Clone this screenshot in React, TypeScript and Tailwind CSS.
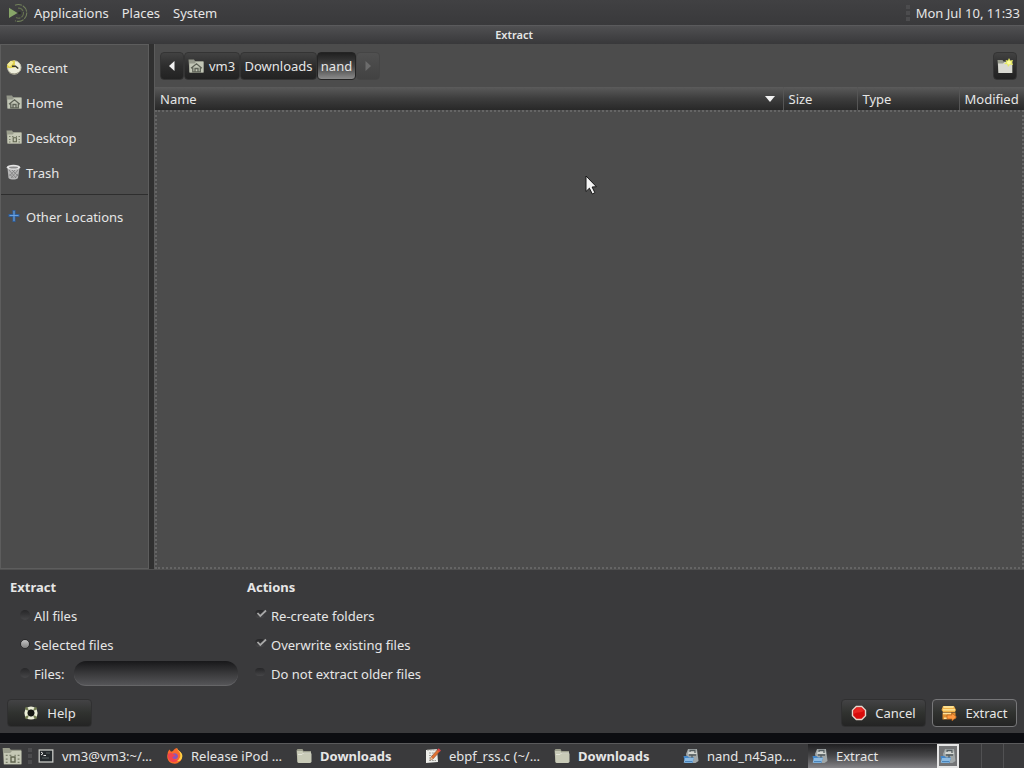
import React, { useState } from "react";
import type { ReactNode } from "react";

type IconProps = { className?: string };

function MateLogo() {
  return (
    <svg viewBox="0 0 20 20" className="size-5 shrink-0" fill="none" aria-hidden="true">
      <path d="M7 2.3A8.4 8.4 0 1 1 7 17.7" stroke="#72805b" strokeWidth="1.1" strokeDasharray="7 1" />
      <path d="M10 5.2A5 5 0 1 1 8 14.5" stroke="#64704f" strokeWidth="1.1" strokeDasharray="6 1" />
      <path d="M1 4.8 9.5 10 1 15z" fill="#87a568" />
      <circle cx="11.5" cy="10" r="1.3" fill="#27301f" />
    </svg>
  );
}

function FolderIcon({ className = "size-4" }: IconProps) {
  return (
    <svg viewBox="0 0 16 16" className={`${className} shrink-0`} aria-hidden="true">
      <path d="M.5 2.5 1.5 1h5l1 2h7.5v11.5H1.5z" fill="#9b9d8c" />
      <path d="M1 3h5.5L8 5.5h7.5V14L14 15H2.5L1.5 14z" fill="#c8cab7" />
      <path d="M2 6.5h4L7.5 5H15" stroke="#e3e4d8" strokeWidth="1" fill="none" />
    </svg>
  );
}

function HomeIcon({ className = "size-4" }: IconProps) {
  return (
    <svg viewBox="0 0 16 16" className={`${className} shrink-0`} aria-hidden="true">
      <path d="M.5 1.5h5.5l1 1.5h8.5v11.5H1.5z" fill="#94978a" />
      <path d="M1.5 5.5h5L8 4h7.5v10.5h-14z" fill="#c2c6b6" />
      <path d="M3 10.3 8.5 5.8l5.3 4.5M4.8 9.5v4.3h7.5V9.5M7 13.5v-3h3v3" fill="none" stroke="#5e6257" strokeWidth="1.3" />
    </svg>
  );
}

function DesktopIcon({ className = "size-4" }: IconProps) {
  return (
    <svg viewBox="0 0 16 16" className={`${className} shrink-0`} aria-hidden="true">
      <path d="M.5 1.5h5.5l1 1.5h8.5v11.5H1.5z" fill="#9b9e8d" />
      <path d="M1.5 5.5h5L8 4h7.5v10.5h-14z" fill="#c5c8b5" />
      <path d="M3 7.5h1.5M6 7.5h1.5M10 7.5h1M12.5 7.5H14M3 10.5h1.5M12.5 10.5H14M3 13h1.5M12.5 13H14" stroke="#7b7f6c" strokeWidth="1" />
      <path d="M7.2 8.8h3.2v4H7.2z" fill="none" stroke="#60644f" strokeWidth="1.1" />
    </svg>
  );
}

function RecentIcon() {
  return (
    <svg viewBox="0 0 16 16" className="size-4 shrink-0" aria-hidden="true">
      <circle cx="8.3" cy="8.5" r="6.7" fill="#eeeedc" stroke="#c2c1ad" />
      <path d="M8.8 8.5 9 1.5C5 .8 1 4 .8 8.5l3 .8z" fill="#dfd04c" />
      <path d="m1 5.5 4-4 2.5 2L4 8z" fill="#f2eb9a" />
      <path d="M6 7.2h3.5l2.8 2.3" stroke="#39382e" strokeWidth="1.5" fill="none" />
      <path d="M3 13.5c3 2 8 2 10.5-1" stroke="#93907e" fill="none" />
    </svg>
  );
}

function TrashIcon() {
  return (
    <svg viewBox="0 0 16 16" className="size-4 shrink-0" aria-hidden="true">
      <path d="m1.5 4 1 10c2 2 7.5 2 9.500 0l1.500-10z" fill="#b6b6b6" />
      <path d="m3 6 7 8M6 6l6 6M3.5 10l4 4M12 6l-7 8M9 6l-5.500 6M12 10l-3 4" stroke="#7d7d7d" strokeWidth=".8" />
      <ellipse cx="7.5" cy="3.3" rx="6.7" ry="2.5" fill="#e4e4e4" />
      <ellipse cx="7.5" cy="3.5" rx="4.5" ry="1.1" fill="#8b8b8b" />
    </svg>
  );
}

function PlusIcon() {
  return (
    <svg viewBox="0 0 16 16" className="size-4 shrink-0" aria-hidden="true">
      <path d="M8 2v12M2.500 7.500h11" stroke="#2f5f9c" strokeWidth="3" />
      <path d="M8 3v10M3.500 7.500h9" stroke="#6ba2df" strokeWidth="1.1" />
    </svg>
  );
}

function NewFolderIcon() {
  return (
    <svg viewBox="0 0 16 16" className="size-4 shrink-0" aria-hidden="true">
      <path d="M.5 2h5l1 1.500h9v11.500h-14z" fill="#999c8e" />
      <path d="M1 5.500h5l1.500-1.500H15v11H1.500z" fill="#d9d9d2" />
      <path d="m12 0 1.300 2.400L16 2l-1 2.400L16 7l-3-.5L11 9l-.7-2.700L7 6l2.400-2L8.500 2l2.400.4z" fill="#e6ea62" />
      <circle cx="12" cy="4.500" r="2" fill="#fbfca0" />
    </svg>
  );
}

function HelpIcon() {
  return (
    <svg viewBox="0 0 16 16" className="size-4 shrink-0" aria-hidden="true">
      <circle cx="8" cy="8" r="5" fill="none" stroke="#edf0d8" strokeWidth="3.200" />
      <path d="m2.500 2.500 2.500 2.500M13.500 2.500 11 5M2.500 13.500 5 11M13.500 13.500 11 11" stroke="#717c50" strokeWidth="2.200" />
      <circle cx="8" cy="8" r="3.300" fill="#151713" />
    </svg>
  );
}

function CancelIcon() {
  return (
    <svg viewBox="0 0 16 16" className="size-4 shrink-0" aria-hidden="true">
      <path d="M5 .8h6L15.200 5v6L11 15.200H5L.8 11V5z" fill="#e7d7cd" />
      <path d="M5.500 2.200h5l3.300 3.300v5l-3.300 3.300h-5l-3.300-3.300v-5z" fill="#d70b0b" />
      <path d="M5.700 3h4.600L13 5.700c-3 2.500-7 1-10 3v-3z" fill="#ea2520" />
    </svg>
  );
}

function ExtractIcon() {
  return (
    <svg viewBox="0 0 16 16" className="size-4 shrink-0" aria-hidden="true">
      <path d="M2 1h11l2 4-1 2H2L.5 5z" fill="#f0b248" />
      <path d="M2.500 2h10M2 4.800h12" stroke="#fff0a8" strokeWidth="1.300" />
      <path d="M1.500 7.500h13V14l-13 .5z" fill="#df8f32" />
      <path d="M2 8.500h8M3 13.200h6" stroke="#ffe29a" strokeWidth="1.500" />
      <path d="M6 10h5V8l4.500 4-4.500 4v-2H6z" fill="#ff993e" stroke="#a95b1c" strokeWidth=".6" />
    </svg>
  );
}

function TerminalIcon() {
  return (
    <svg viewBox="0 0 16 16" className="size-4 shrink-0" aria-hidden="true">
      <rect x="1.200" y="2" width="13.600" height="12" fill="#24292c" stroke="#c7c8c4" strokeWidth="1.300" />
      <path d="m3 4 2 1.500L3 7M5.500 7.500H8" stroke="#eee" fill="none" />
      <path d="M8 5h4M4 10h7" stroke="#566061" />
    </svg>
  );
}

function FirefoxIcon() {
  return (
    <svg viewBox="0 0 16 16" className="size-4 shrink-0" aria-hidden="true">
      <path d="M2.500 1.500 4 3.800 6 3C7 1 9 .3 10 0c0 2 2 2.500 3.500 4.200 4 5-.2 11.400-5.500 11.500C2 15.800-1 10.700.7 5.500c0-1.400.7-2.800 1.800-4z" fill="#f96b2b" />
      <path d="M10 0c0 3 3 3 3.300 7 .3 3-2 5.500-5 5.600 5 2.400 7.400-2 7-5.300C15 3.800 11 3.200 10 0z" fill="#ffd043" />
      <path d="M5.200 6.200c2-2 6-.8 5.800 2.300-.2 2.700-4 3.800-6 1.300L3 7.500z" fill="#8955bc" />
      <path d="M1 6c2-1.500 4-1 5.200.3L8.600 7C8 9 6 8 5.300 9.300c1.300 3 5.300 3 6.700 1-1 4-6 5-9 2.300C1 11 .6 8.300 1 6z" fill="#f2434e" />
    </svg>
  );
}

function EditorIcon() {
  return (
    <svg viewBox="0 0 16 16" className="size-4 shrink-0" aria-hidden="true">
      <path d="m1 2 11-1 1 13-12 1z" fill="#eeeeea" />
      <path d="M2 2h10M4 5h6M4 7.500h5M4 10h3M4 12.500h7" stroke="#8b8b85" strokeWidth=".8" strokeDasharray="2 .8" />
      <path d="m5 12 1-3 7-7.800 2 2L8 11z" fill="#df7132" stroke="#7a402f" strokeWidth=".5" />
      <path d="m12.400 1.800 1.300-1.500L16 2.400l-1.500 1.500z" fill="#d64048" />
      <path d="m5 12 1-3 2 2z" fill="#e8c49b" />
    </svg>
  );
}

function ArchiveIcon() {
  return (
    <svg viewBox="0 0 16 16" className="size-4 shrink-0" aria-hidden="true">
      <path d="M5 1h9l1.500 12-3 2H5L3 6z" fill="#a0a6a7" />
      <path d="M6 2h7l1 4H5z" fill="#d3d6d2" />
      <path d="M7 4V2.500h5V5M6 7h7M9 7v5" stroke="#535c5f" strokeWidth="1.300" fill="none" />
      <path d="M.5 8h4L6 9.500h5L9.500 15H2z" fill="#4386c8" />
      <path d="M2 10h9l-2 4.800H.7z" fill="#8dbbe2" />
      <path d="M2 13.500h7" stroke="#4a85bb" />
    </svg>
  );
}

const places: { label: string; icon: ReactNode }[] = [
  { label: "Recent", icon: <RecentIcon /> },
  { label: "Home", icon: <HomeIcon /> },
  { label: "Desktop", icon: <DesktopIcon /> },
  { label: "Trash", icon: <TrashIcon /> },
];

const tasks: { label: string; icon: ReactNode; bold?: boolean; active?: boolean }[] = [
  { label: "vm3@vm3:~/…", icon: <TerminalIcon /> },
  { label: "Release iPod …", icon: <FirefoxIcon /> },
  { label: "Downloads", icon: <FolderIcon />, bold: true },
  { label: "ebpf_rss.c (~/…", icon: <EditorIcon /> },
  { label: "Downloads", icon: <FolderIcon />, bold: true },
  { label: "nand_n45ap.…", icon: <ArchiveIcon /> },
  { label: "Extract", icon: <ArchiveIcon />, active: true },
];

const pathButton =
  "flex h-7 items-center rounded-sm border border-[#343434] bg-linear-to-b from-[#424242] via-[#2d2d2d] to-[#222]";
const dialogButton =
  "flex h-7 w-[85px] items-center justify-center gap-2 rounded border bg-linear-to-b from-[#434345] via-[#30322f] to-[#242424]";

function Grip() {
  return (
    <span className="flex w-1 shrink-0 flex-col gap-0.5" aria-hidden="true">
      <i className="h-1 bg-[#4c4c4e]" />
      <i className="h-1 bg-[#4c4c4e]" />
      <i className="h-1 bg-[#4c4c4e]" />
    </span>
  );
}

function PlaceButton({ label, icon }: { label: string; icon: ReactNode }) {
  return (
    <button className="flex h-[35px] w-full items-center gap-1 pl-[5px]">
      <span className="mb-0.5">{icon}</span>
      {label}
    </button>
  );
}

function ModeOption({ label, value, mode, onChange }: { label: string; value: string; mode: string; onChange: (v: string) => void }) {
  return (
    <label className="flex items-center gap-1">
      <input
        type="radio"
        name="mode"
        checked={mode === value}
        onChange={() => onChange(value)}
        className="mb-0.5 size-2.5 appearance-none rounded-full bg-linear-to-b from-[#272729] to-[#464648] checked:border checked:border-[#2a2a2b] checked:from-[#c4c4c4] checked:to-[#808080]"
      />
      {label}
    </label>
  );
}

function ActionOption({ label, initial = false }: { label: string; initial?: boolean }) {
  const [on, setOn] = useState(initial);
  return (
    <label className="flex h-[29px] items-center gap-1">
      <span className="mb-1 grid size-3 items-center">
        <input
          type="checkbox"
          checked={on}
          onChange={() => setOn(!on)}
          className="col-start-1 row-start-1 h-2 w-2.5 appearance-none rounded-sm bg-linear-to-b from-[#262628] to-[#464648]"
        />
        {on && (
          <svg viewBox="0 0 12 12" className="pointer-events-none col-start-1 row-start-1 size-3" aria-hidden="true">
            <path d="m2.500 5 2.800 3L11 2.500" fill="none" stroke="#a8a8a8" strokeWidth="1.800" />
          </svg>
        )}
      </span>
      {label}
    </label>
  );
}

export default function App() {
  const [mode, setMode] = useState("selected");
  const [pattern, setPattern] = useState("");

  return (
    <div className="flex min-h-screen cursor-default flex-col bg-[#3a3a3c] font-['Noto_Sans',sans-serif] text-[13px] leading-5 text-[#e6e6e6]">
      <header className="flex h-[25px] items-center justify-between bg-linear-to-b from-[#414143] to-[#39393b] pr-1 pl-2">
        <nav className="flex items-center">
          <button className="flex items-center gap-1.5"><MateLogo />Applications</button>
          <button className="ml-[13px]">Places</button>
          <button className="ml-[13px]">System</button>
        </nav>
        <div className="flex items-center gap-1.5"><Grip /><time>Mon Jul 10, 11:33</time></div>
      </header>

      <div className="flex h-[19px] items-center justify-center border-t border-[#5a5a5c] bg-linear-to-b from-[#505052] to-[#38383a] pl-1">
        <h1 className="text-[11px] leading-4 font-semibold">Extract</h1>
      </div>

      <main className="flex flex-1">
        <aside className="w-[149px] shrink-0 border border-[#5d5d5d] bg-[#4c4c4c] pt-[5px]">
          {places.map((place) => (
            <PlaceButton key={place.label} label={place.label} icon={place.icon} />
          ))}
          <hr className="my-1 border-[#2e2e2e]" />
          <PlaceButton label="Other Locations" icon={<PlusIcon />} />
        </aside>
        <div className="w-[5px] shrink-0 bg-[#303030]" />

        <section className="flex min-w-0 flex-1 flex-col border-l border-[#5b5b5b] bg-[#4c4c4c]">
          <div className="flex h-[43px] items-center justify-between pr-[7px] pl-[5px]">
            <div className="flex">
              <button aria-label="Scroll left" className={`${pathButton} w-6 justify-center`}>
                <svg viewBox="0 0 8 10" className="h-2.5 w-2" aria-hidden="true"><path d="M6.500 0v10L1 5z" fill="#f0f0f0" /></svg>
              </button>
              <button className={`${pathButton} w-14 gap-[5px] pl-[3px]`}><HomeIcon />vm3</button>
              <button className={`${pathButton} w-[77px] justify-center`}>Downloads</button>
              <button className="flex h-7 w-[39px] items-center justify-center rounded-sm border border-[#242424] bg-linear-to-b from-[#202020] via-[#444] to-[#8c8c8c]">nand</button>
              <button aria-label="Scroll right" disabled className="flex h-7 w-6 items-center justify-center rounded-sm border border-[#454545] bg-linear-to-b from-[#505050] to-[#424242]">
                <svg viewBox="0 0 8 10" className="h-2.5 w-2" aria-hidden="true"><path d="M1.500 0v10L7 5z" fill="#6c6c6c" /></svg>
              </button>
            </div>
            <button aria-label="Create folder" className={`${pathButton} w-6 justify-center`}><NewFolderIcon /></button>
          </div>
          <table className="w-full table-fixed border-collapse text-left">
            <colgroup>
              <col />
              <col className="w-[74px]" />
              <col className="w-[102px]" />
              <col className="w-[65px]" />
            </colgroup>
            <thead>
              <tr className="h-[23px] bg-linear-to-b from-[#5b5b5b] via-[#3d3d3d] to-[#282828]">
                <th className="p-0 pr-2 pl-[5px] font-normal">
                  <div className="flex items-center justify-between">
                    Name
                    <svg viewBox="0 0 10 6" className="h-1.5 w-2.5" aria-hidden="true"><path d="M0 0h10L5 6z" fill="#f2f2f2" /></svg>
                  </div>
                </th>
                <th className="border-l border-[#555] p-0 pl-[5px] font-normal">Size</th>
                <th className="border-l border-[#555] p-0 pl-[5px] font-normal">Type</th>
                <th className="border-l border-[#555] p-0 pl-[5px] font-normal">Modified</th>
              </tr>
            </thead>
          </table>
          <div className="relative flex-1 border-2 border-dotted border-[#656565]">
            <svg viewBox="0 0 12 20" className="absolute top-[63px] left-[428px] h-5 w-3" aria-hidden="true">
              <path d="M1 1v15.500l3.400-3.300L7.300 19l2.600-1.300L7.100 12l4.300-.3z" fill="#f4f4f4" stroke="#171717" strokeWidth="1" />
            </svg>
          </div>
        </section>
      </main>

      <section className="border-t border-[#505050] px-[7px] pb-1.5">
        <div className="flex pt-[7px]">
          <fieldset className="w-[240px] pl-[3px]">
            <legend className="font-bold">Extract</legend>
            <div className="pt-0.5 pl-2.5">
              <div className="flex h-[29px] items-center pt-1"><ModeOption label="All files" value="all" mode={mode} onChange={setMode} /></div>
              <div className="flex h-[29px] items-center pt-1"><ModeOption label="Selected files" value="selected" mode={mode} onChange={setMode} /></div>
              <div className="flex h-[29px] items-center gap-[9px] pt-1">
                <ModeOption label="Files:" value="files" mode={mode} onChange={setMode} />
                <input
                  type="text"
                  aria-label="Files pattern"
                  value={pattern}
                  onChange={(e) => setPattern(e.target.value)}
                  className="h-[25px] w-[164px] rounded-xl border-b border-[#666668] bg-linear-to-b from-[#18181a] via-[#38383a] to-[#555558] px-3 outline-none"
                />
              </div>
            </div>
          </fieldset>
          <fieldset>
            <legend className="font-bold">Actions</legend>
            <div className="pt-1 pl-2">
              <ActionOption label="Re-create folders" initial />
              <ActionOption label="Overwrite existing files" initial />
              <ActionOption label="Do not extract older files" />
            </div>
          </fieldset>
        </div>
        <div className="flex items-center justify-between pt-[11px]">
          <button className={`${dialogButton} border-[#303031]`}><HelpIcon />Help</button>
          <div className="flex gap-1.5">
            <button className={`${dialogButton} border-[#303031]`}><CancelIcon />Cancel</button>
            <button className={`${dialogButton} border-[#777779]`}><ExtractIcon />Extract</button>
          </div>
        </div>
      </section>

      <div className="h-2.5 bg-[#0c0d11]" />
      <footer className="flex h-[25px] items-center border-t border-[#5a5a5c] bg-[#3a3a3c] pl-0.5">
        <button aria-label="Show files" className="shrink-0"><DesktopIcon className="size-5" /></button>
        <span className="flex w-3 justify-end pr-0.5"><Grip /></span>
        <nav className="flex min-w-0 flex-1">
          {tasks.map((task, i) => (
            <button
              key={i}
              className={`flex h-6 min-w-0 max-w-[129px] flex-1 items-center gap-2 pl-1 whitespace-nowrap ${task.bold ? "font-bold" : ""} ${task.active ? "bg-linear-to-b from-[#1f1f21] via-[#48484a] to-[#858488]" : ""}`}
            >
              {task.icon}
              {task.label}
            </button>
          ))}
        </nav>
        <div className="flex h-6 shrink-0">
          <button aria-label="Workspace 1" className="flex w-[22px] items-center justify-center border-2 border-[#e5e5e5] bg-[#737476]"><ArchiveIcon /></button>
          <button aria-label="Workspace 2" className="w-[23px] border-r border-[#515153]" />
          <button aria-label="Workspace 3" className="w-[22px] border-r border-[#515153]" />
          <button aria-label="Workspace 4" className="w-5" />
        </div>
      </footer>
    </div>
  );
}
